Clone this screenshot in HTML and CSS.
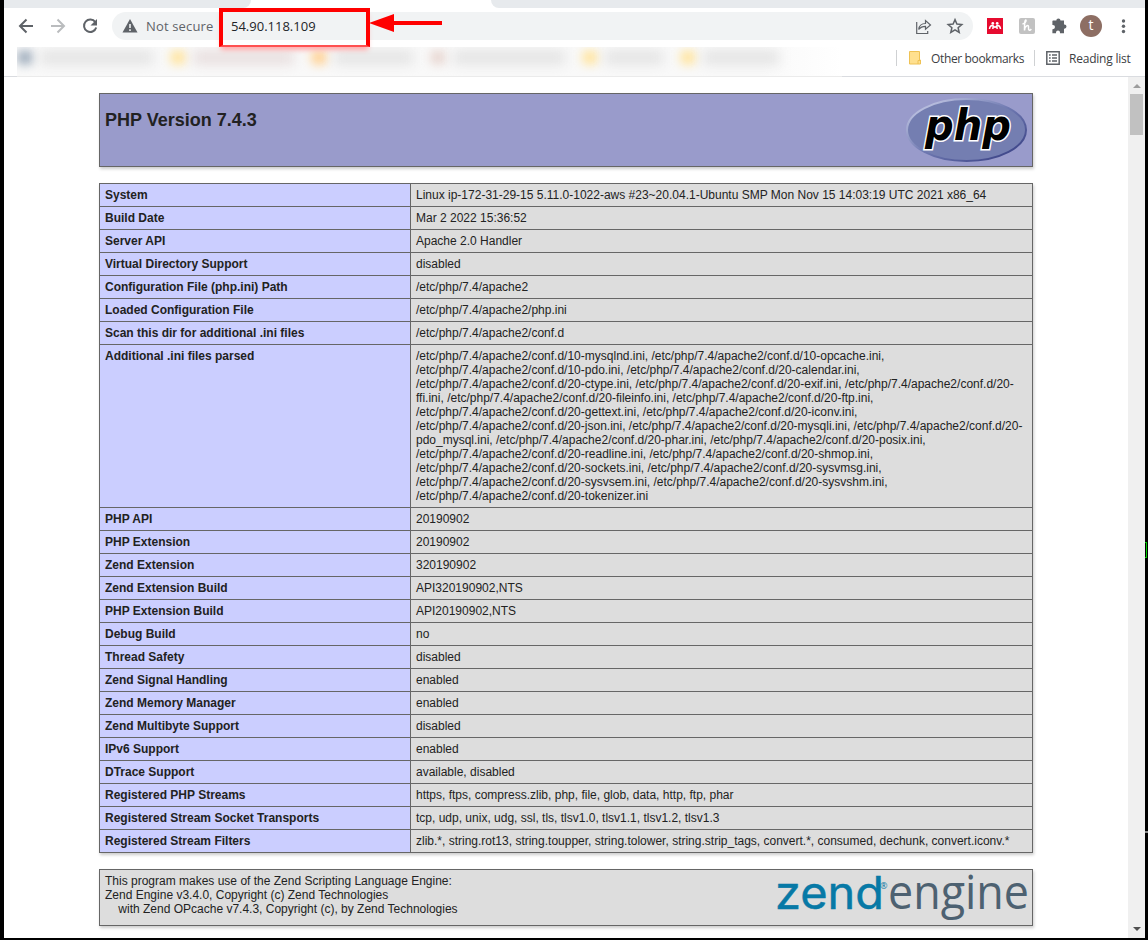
FILE: index.html
```html
<!DOCTYPE html>
<html lang="en">
<head>
<meta charset="utf-8">
<title>phpinfo()</title>
<link rel="stylesheet" href="styles.css">
</head>
<body>
<div class="window">
  <div class="tabs"><div class="tab-left"></div><div class="tab-active"></div><div class="tab-right"></div></div>
  <div class="toolbar">
    <svg class="nav" width="112" height="36" viewBox="0 0 112 36" fill="none" stroke="#5f6368" stroke-width="2">
      <path d="M29 18H16.500M22.500 11.500L16 18l6.500 6.500"/>
      <path stroke="#babcbe" d="M47 18h12.500M53.500 11.500L60 18l-6.500 6.500"/>
      <path d="M91.300 14.200A6.200 6.200 0 1 0 92.200 19.500"/>
      <path fill="#5f6368" stroke="none" d="M93 11v6.500h-6.500z"/>
    </svg>
    <div class="omnibox">
      <svg width="16" height="14" viewBox="0 0 16 14"><path fill="#5f6368" d="M8 0l7.500 13.500H.5z"/><path stroke="#f1f3f4" stroke-width="1.600" d="M8 5v4M8 10.300v1.600"/></svg>
      <span class="secure">Not secure</span>
      <span class="address">54.90.118.109</span>
      <svg class="omni-icons" width="50" height="20" viewBox="0 0 50 20" fill="none" stroke="#5f6368" stroke-width="1.200">
        <path d="M1.700 6v11.500h11V15M3.700 13.500c.5-4 3-6 6.800-6V4.500L15.500 9l-5 4.300v-3c-3.200 0-5 .7-6.800 3.200z"/>
        <path stroke-width="1.500" d="M40 3.600l1.900 4.500 4.900.4-3.700 3.200 1.100 4.800-4.200-2.600-4.200 2.600 1.100-4.800-3.700-3.200 4.900-.4z"/>
      </svg>
    </div>
    <svg class="extensions" width="170" height="36" viewBox="0 0 170 36">
      <rect x="14" y="10" width="16" height="16" fill="#e60b2f"/>
      <path d="M16.500 21c.3-2.300 1.200-3.500 2.700-3.500 1.500 0 1.800 1.700 2.800 1.700s1.300-1.700 2.800-1.700 2.400 1.200 2.700 3.500M19.700 17.800c.8.700.3 2 .1 3.200M24.300 17.800c-.8.700-.3 2-.1 3.200" fill="none" stroke="#fff" stroke-width="1.500"/>
      <circle cx="19.800" cy="15.400" r="1.400" fill="#fff"/><circle cx="24.200" cy="15.400" r="1.400" fill="#fff"/>
      <rect x="46" y="10" width="16" height="16" rx="2" fill="#c2c2c2"/>
      <path d="M49.500 16c2.500-.5 4-3 3.500-3.800-1-.7-1.500 2-1.500 10.300 0-4.500 4.500-7 4-3-.3 3 1.300 3.500 2.800 1.500" fill="none" stroke="#fff" stroke-width="1.500"/>
      <path fill="#5f6368" d="M80 12.500h3.300a2.100 2.100 0 0 1 4.200 0H91v4h.4a2.100 2.100 0 0 1 0 4.200H91v4.500h-4v-.7a2 2 0 0 0-4 0v.7h-3.600v-4h.5a2.100 2.100 0 0 0 0-4.200h-.5v-3.900z"/>
      <circle cx="118" cy="18" r="11" fill="#8d6e63"/>
      <text x="118" y="22.300" class="avatar" text-anchor="middle">t</text>
      <g fill="#5f6368"><circle cx="150.500" cy="13" r="1.700"/><circle cx="150.500" cy="18.200" r="1.700"/><circle cx="150.500" cy="23.500" r="1.700"/></g>
    </svg>
  </div>
  <div class="bookmarks">
    <div class="blurred">
      <i class="dot blue"></i><i class="smear s1"></i>
      <i class="dot yellow"></i><i class="smear s2"></i>
      <i class="dot orange"></i><i class="smear s3"></i>
      <i class="dot rose"></i><i class="smear s4"></i>
      <i class="dot yellow"></i><i class="smear s5"></i>
      <i class="dot yellow"></i><i class="smear s6"></i>
    </div>
    <div class="bookmark-tools">
      <i class="rule"></i>
      <svg class="folder" width="14" height="16" viewBox="0 0 14 16"><path d="M1.500 1.500h10v8.500h1v4h-11z" fill="#ffe08f" stroke="#efc254"/><path d="M10 14v-3.500h2" fill="none" stroke="#efc254"/></svg>
      <span class="other">Other bookmarks</span>
      <i class="rule"></i>
      <svg class="list" width="14" height="14" viewBox="0 0 14 14" fill="none" stroke="#5f6368" stroke-width="1.500"><path d="M.8.800h12.400v12.400H.8zM3 4h1.700M6 4h5M3 7h1.700M6 7h5M3 10h1.700M6 10h5"/></svg>
      <span class="reading">Reading list</span>
    </div>
  </div>
  <div class="viewport">
    <main>
      <header class="box title">
        <h1>PHP Version 7.4.3</h1>
        <svg width="124" height="68" viewBox="0 0 124 68">
          <defs><linearGradient id="rim" x1="0" y1="0" x2="1" y2="1"><stop offset=".15" stop-color="#b5bbdc"/><stop offset=".5" stop-color="#6f79b1"/><stop offset=".85" stop-color="#434b8d"/></linearGradient></defs>
          <ellipse cx="61.500" cy="34" rx="59.500" ry="31" fill="#747eb1" stroke="url(#rim)" stroke-width="2"/>
          <text x="20" y="44" class="php" textLength="86" lengthAdjust="spacingAndGlyphs">php</text>
        </svg>
      </header>
      <table class="box">
        <tr><th>System</th><td>Linux ip-172-31-29-15 5.11.0-1022-aws #23~20.04.1-Ubuntu SMP Mon Nov 15 14:03:19 UTC 2021 x86_64</td></tr>
        <tr><th>Build Date</th><td>Mar 2 2022 15:36:52</td></tr>
        <tr><th>Server API</th><td>Apache 2.0 Handler</td></tr>
        <tr><th>Virtual Directory Support</th><td>disabled</td></tr>
        <tr><th>Configuration File (php.ini) Path</th><td>/etc/php/7.4/apache2</td></tr>
        <tr><th>Loaded Configuration File</th><td>/etc/php/7.4/apache2/php.ini</td></tr>
        <tr><th>Scan this dir for additional .ini files</th><td>/etc/php/7.4/apache2/conf.d</td></tr>
        <tr><th>Additional .ini files parsed</th><td>/etc/php/7.4/apache2/conf.d/10-mysqlnd.ini, /etc/php/7.4/apache2/conf.d/10-opcache.ini,<br>/etc/php/7.4/apache2/conf.d/10-pdo.ini, /etc/php/7.4/apache2/conf.d/20-calendar.ini,<br>/etc/php/7.4/apache2/conf.d/20-ctype.ini, /etc/php/7.4/apache2/conf.d/20-exif.ini, /etc/php/7.4/apache2/conf.d/20-<br>ffi.ini, /etc/php/7.4/apache2/conf.d/20-fileinfo.ini, /etc/php/7.4/apache2/conf.d/20-ftp.ini,<br>/etc/php/7.4/apache2/conf.d/20-gettext.ini, /etc/php/7.4/apache2/conf.d/20-iconv.ini,<br>/etc/php/7.4/apache2/conf.d/20-json.ini, /etc/php/7.4/apache2/conf.d/20-mysqli.ini, /etc/php/7.4/apache2/conf.d/20-<br>pdo_mysql.ini, /etc/php/7.4/apache2/conf.d/20-phar.ini, /etc/php/7.4/apache2/conf.d/20-posix.ini,<br>/etc/php/7.4/apache2/conf.d/20-readline.ini, /etc/php/7.4/apache2/conf.d/20-shmop.ini,<br>/etc/php/7.4/apache2/conf.d/20-sockets.ini, /etc/php/7.4/apache2/conf.d/20-sysvmsg.ini,<br>/etc/php/7.4/apache2/conf.d/20-sysvsem.ini, /etc/php/7.4/apache2/conf.d/20-sysvshm.ini,<br>/etc/php/7.4/apache2/conf.d/20-tokenizer.ini</td></tr>
        <tr><th>PHP API</th><td>20190902</td></tr>
        <tr><th>PHP Extension</th><td>20190902</td></tr>
        <tr><th>Zend Extension</th><td>320190902</td></tr>
        <tr><th>Zend Extension Build</th><td>API320190902,NTS</td></tr>
        <tr><th>PHP Extension Build</th><td>API20190902,NTS</td></tr>
        <tr><th>Debug Build</th><td>no</td></tr>
        <tr><th>Thread Safety</th><td>disabled</td></tr>
        <tr><th>Zend Signal Handling</th><td>enabled</td></tr>
        <tr><th>Zend Memory Manager</th><td>enabled</td></tr>
        <tr><th>Zend Multibyte Support</th><td>disabled</td></tr>
        <tr><th>IPv6 Support</th><td>enabled</td></tr>
        <tr><th>DTrace Support</th><td>available, disabled</td></tr>
        <tr><th>Registered PHP Streams</th><td>https, ftps, compress.zlib, php, file, glob, data, http, ftp, phar</td></tr>
        <tr><th>Registered Stream Socket Transports</th><td>tcp, udp, unix, udg, ssl, tls, tlsv1.0, tlsv1.1, tlsv1.2, tlsv1.3</td></tr>
        <tr><th>Registered Stream Filters</th><td>zlib.*, string.rot13, string.toupper, string.tolower, string.strip_tags, convert.*, consumed, dechunk, convert.iconv.*</td></tr>
      </table>
      <footer class="box zend">
        <p>This program makes use of the Zend Scripting Language Engine:<br>Zend Engine v3.4.0, Copyright (c) Zend Technologies<br>&nbsp;&nbsp;&nbsp;&nbsp;with Zend OPcache v7.4.3, Copyright (c), by Zend Technologies</p>
        <svg width="256" height="55" viewBox="0 0 256 55">
          <text x="-1" y="38.500" class="zend-word" textLength="109" lengthAdjust="spacingAndGlyphs">zend</text>
          <text x="104" y="19" class="reg">®</text>
          <text x="112" y="38.500" class="engine-word" textLength="141" lengthAdjust="spacingAndGlyphs">engine</text>
        </svg>
      </footer>
    </main>
    <div class="scrollbar"><i class="up"></i><i class="thumb"></i><i class="down"></i></div>
  </div>
</div>
<div class="highlight"></div>
<svg class="arrow" width="74" height="20" viewBox="0 0 74 20"><path fill="#f00" d="M0 9L25 0v7h48v4H25v7z"/></svg>
<div class="edge-mark green"></div>
<div class="edge-mark gray"></div>
</body>
</html>
```
FILE: styles.css
```css
* { box-sizing: border-box; }
body {
  margin: 0;
  width: 1148px;
  height: 940px;
  padding: 0 3px 2px 4px;
  background: #000;
  overflow: hidden;
  position: relative;
  font-family: "Liberation Sans", Arial, sans-serif;
  color: #222;
}
.window { height: 938px; background: #fff; display: flex; flex-direction: column; }
svg { display: block; flex: none; overflow: visible; }
.tabs { height: 8px; display: flex; background: #fff; flex: none; }
.tab-left { width: 247px; background: #e7eaed; border-bottom-right-radius: 8px; }
.tab-active { width: 240px; }
.tab-right { flex: 1; background: #e7eaed; border-bottom-left-radius: 8px; }
.toolbar { height: 36px; display: flex; align-items: center; flex: none; }
.nav { margin-right: -4px; }
.omnibox {
  width: 861px; height: 28px; border-radius: 14px; background: #f1f3f4;
  display: flex; align-items: center; padding-left: 10px; flex: none;
  font: 13px "Open Sans", "Noto Sans", sans-serif;
}
.secure { width: 93px; padding-left: 8px; color: #5f6368; white-space: nowrap; letter-spacing: .15px; }
.address { color: #222529; letter-spacing: 0; }
.omni-icons { margin-left: auto; margin-right: 8px; }
.avatar { font: 14px "Open Sans", sans-serif; fill: #fff; }
.bookmarks { height: 33px; border-bottom: 1px solid #dadce0; display: flex; flex: none; }
.blurred {
  width: 825px; height: 30px; margin: 3px 0 -1px 13px; padding-top: 4px; overflow: hidden;
  display: flex; background: linear-gradient(90deg, #f9f9f9 90%, #fff); border-bottom: 1px solid #ebebeb;
}
.dot, .smear { filter: blur(5px); flex: none; margin-top: -1px; height: 15px; }
.dot { width: 16px; border-radius: 5px; }
.blue { background: #a5b2c0; }
.yellow { background: #ffe6a6; }
.orange { background: #ffd49a; }
.rose { background: #e9d9d4; }
.smear { background: #e5e5e5; margin-left: 7px; margin-right: 17px; filter: blur(6px); }
.s1 { width: 113px; } .s2 { width: 101px; background: #e9e0e0; } .s3 { width: 79px; }
.s4 { width: 112px; } .s5 { width: 58px; } .s6 { width: 76px; }
.bookmark-tools { display: flex; align-items: center; padding-left: 54px; height: 28px; font: 12px "Open Sans", "Noto Sans", sans-serif; color: #3c4043; white-space: nowrap; }
.rule { width: 1px; height: 16px; background: #cfd1d3; flex: none; }
.folder { margin-left: 11px; }
.other { margin-left: 9px; width: 103px; letter-spacing: -.36px; }
.list { margin-left: 11px; }
.reading { margin-left: 9px; letter-spacing: -.22px; }
.viewport { flex: 1; display: flex; min-height: 0; }
main { flex: 1; padding: 16px 95px 0; overflow: hidden; }
.box { width: 934px; border: 1px solid #666; box-shadow: 1px 2px 3px #ccc; }
.title { height: 74px; background: #999bcb; display: flex; justify-content: space-between; padding: 2px 3px 0 5px; }
h1 { margin: 14px 0 0; font-size: 18px; line-height: 21px; }
.php { font: italic bold 42px "DejaVu Sans", sans-serif; stroke: #fff; stroke-width: 3px; paint-order: stroke; }
table { border-collapse: collapse; margin-top: 16px; table-layout: fixed; }
th, td { border: 1px solid #666; padding: 4px 5px; font-size: 12px; line-height: 14px; vertical-align: top; text-align: left; white-space: nowrap; }
th { width: 311px; background: #cbceff; }
td { background: #ddd; }
.zend { height: 57px; margin-top: 16px; background: #ddd; display: flex; justify-content: space-between; padding-left: 5px; }
.zend p { margin: 4px 0 0; font-size: 12px; line-height: 14px; white-space: nowrap; }
.zend-word { font: 45px Inter, sans-serif; fill: #0779a6; stroke: #0779a6; stroke-width: .5px; }
.engine-word { font: 47px "Open Sans", sans-serif; fill: #4d6171; }
.reg { font: 9px "Open Sans", sans-serif; fill: #0779a6; }
.scrollbar { width: 17px; background: #f0f0f0; display: flex; flex-direction: column; align-items: center; }
.up { border: 4px solid transparent; border-top: 0; border-bottom-color: #9c9c9c; margin-top: 7px; }
.thumb { width: 13px; height: 41px; background: #c1c1c1; margin-top: 6px; }
.down { border: 4px solid transparent; border-bottom: 0; border-top-color: #505050; margin-top: auto; margin-bottom: 7px; }
.highlight { position: absolute; left: 219px; top: 8px; width: 151px; height: 39px; border: 4px solid #f00; border-bottom: 2px solid #ff5050; box-shadow: 0 5px 5px -2px #ffaaaa; }
.arrow { position: absolute; left: 369px; top: 14px; }
.edge-mark { position: absolute; right: 0; }
.green { top: 542px; height: 16px; border: 1px solid #00c800; border-left: 0; right: 1px; width: 2px; }
.gray { top: 831px; width: 3px; height: 2px; background: #888; }
```
